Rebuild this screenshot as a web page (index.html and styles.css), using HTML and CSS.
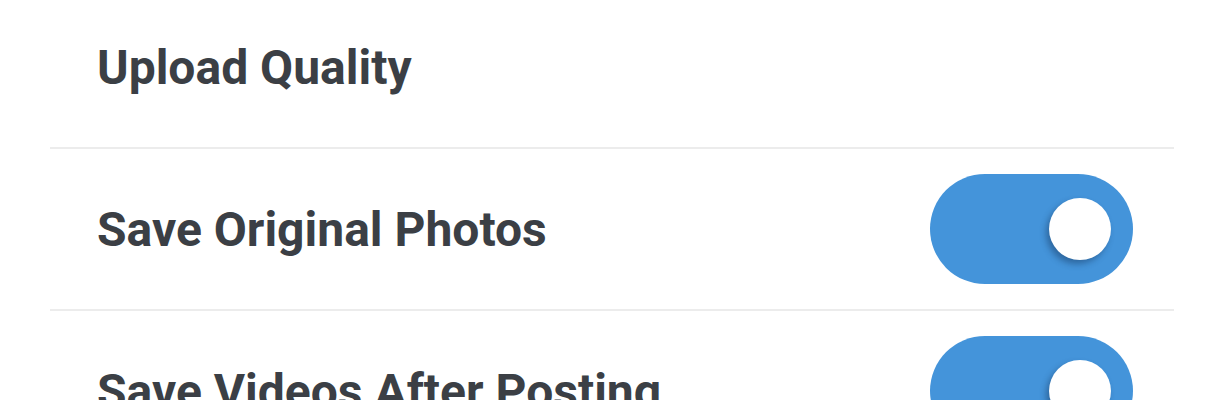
FILE: index.html
```html
<!DOCTYPE html>
<html>
<head>
    <title>Settings</title>
    <meta charset="utf-8" />
    <link rel="stylesheet" href="styles.css">
</head>
<body>
    <div id="settings">
        <div class="row">
            <span class="label">Upload Quality</span>
        </div>
        <div class="row">
            <span class="label">Save Original Photos</span>
            <span class="switch on"><span class="knob"></span></span>
        </div>
        <div class="row">
            <span class="label">Save Videos After Posting</span>
            <span class="switch on"><span class="knob"></span></span>
        </div>
    </div>
</body>
</html>
```

FILE: styles.css
```css
body { margin:0; background-color:#fff; font-family:Roboto, "Liberation Sans", sans-serif; overflow:hidden; }
#settings { width:1124px; margin:-13px 0 0 50px; }
.row { height:160px; display:flex; align-items:center; justify-content:space-between; padding:0 41px 0 47px; border-bottom:2px solid #ececec; }
.label { font-size:48px; font-weight:700; color:#3b3f45; }
.switch { width:203px; height:110px; border-radius:55px; background-color:#4494da; display:flex; align-items:center; justify-content:flex-end; padding-right:22px; box-sizing:border-box; }
.knob { width:62px; height:62px; border-radius:50%; background-color:#fff; box-shadow:-3px 4px 6px rgba(20, 50, 90, 0.45); }
```
